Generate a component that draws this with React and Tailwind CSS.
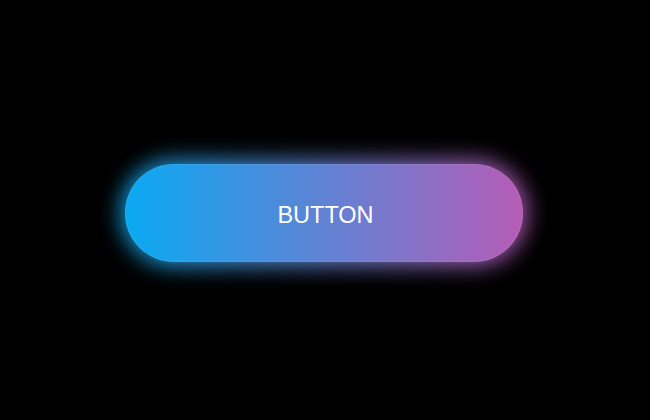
export default function App() {
  return (
    <div className="w-[650px] h-[420px] bg-black flex items-center justify-center pt-[6px] pr-[2px]">
      <div className="relative w-[398px] h-[98px]">
        <div className="absolute -inset-[4px] rounded-full bg-[linear-gradient(to_right,#10b0f5,#c060c0)] blur-[11px] opacity-90" />
        <button className="relative w-full h-full rounded-full bg-[linear-gradient(to_right,#0aa9f2,#b65cb6)] text-white text-[23.5px] pt-[5px] pl-[3px] font-['Liberation_Sans',Arial,sans-serif] shadow-[inset_0_0_2px_rgba(255,255,255,0.25)]">
          BUTTON
        </button>
      </div>
    </div>
  );
}
